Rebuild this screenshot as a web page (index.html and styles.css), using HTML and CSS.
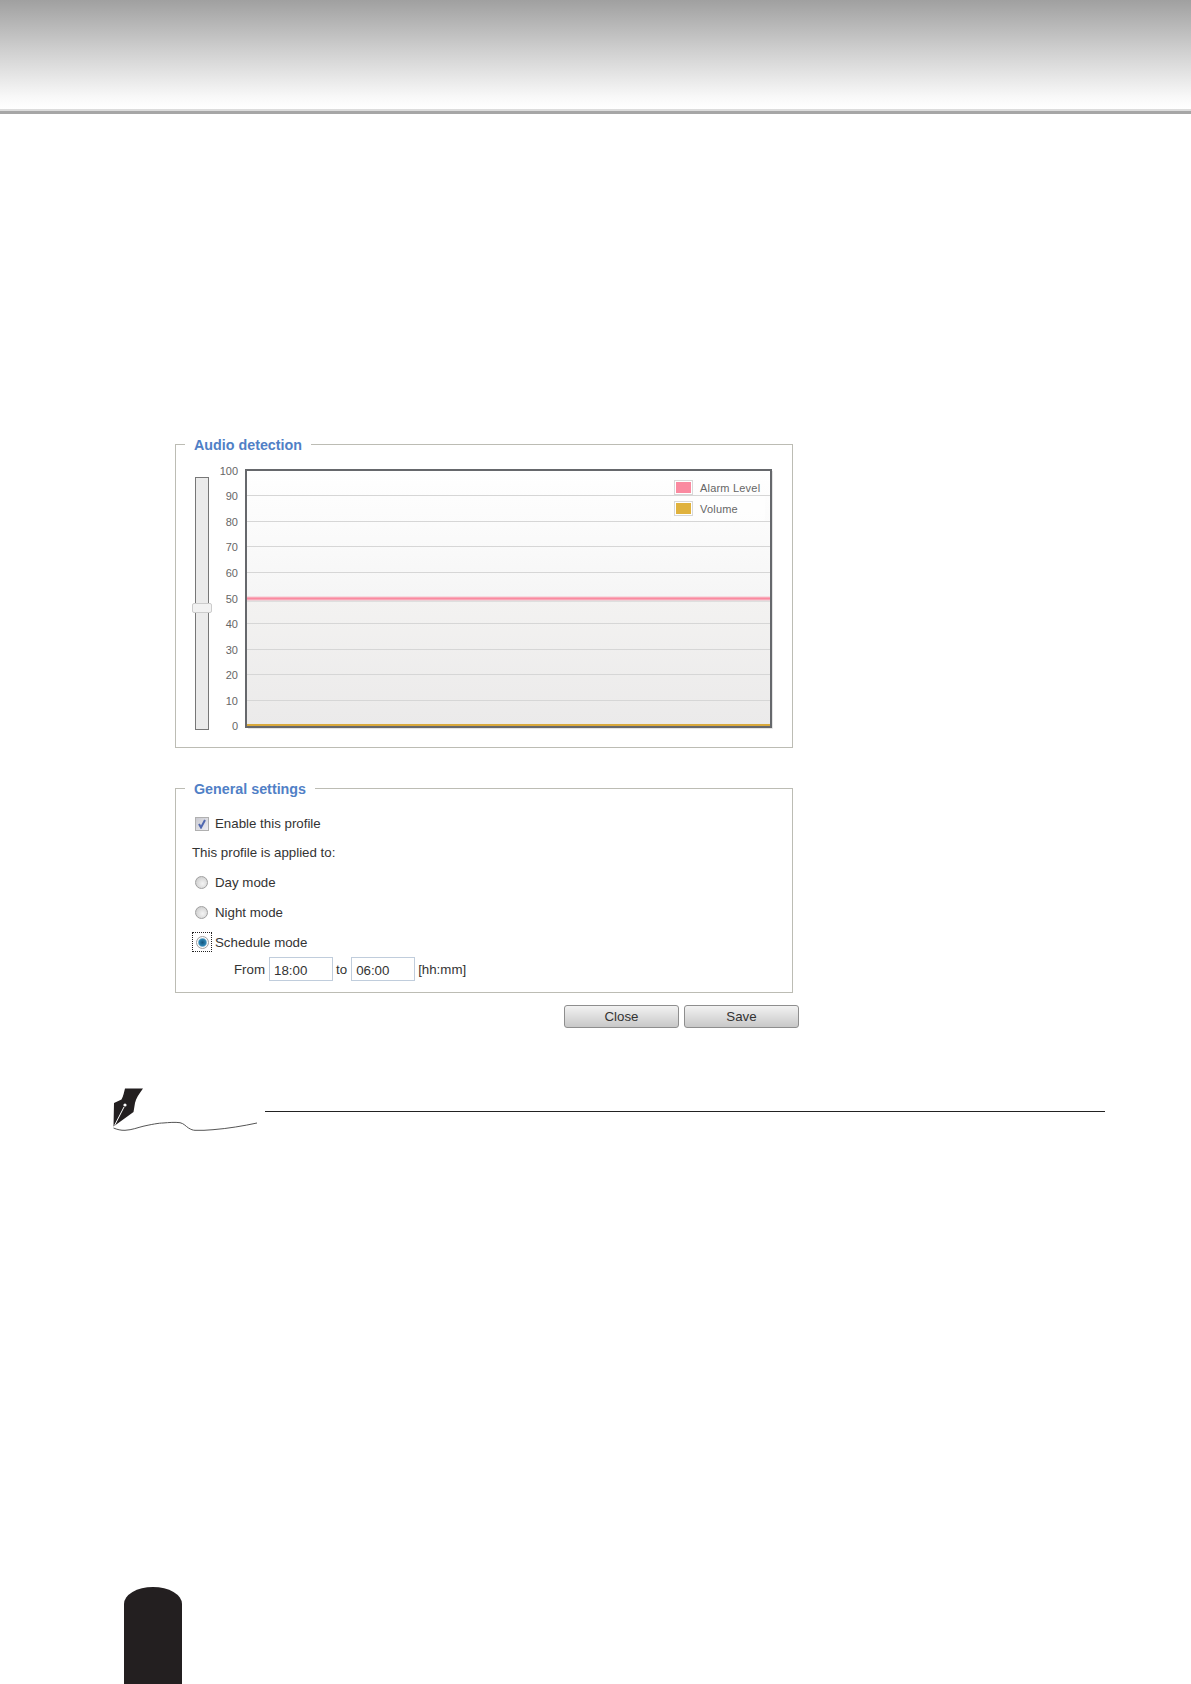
FILE: index.html
```html
<!DOCTYPE html>
<html lang="en">
<head>
  <meta charset="UTF-8" />
  <title>Audio detection</title>
  <link rel="stylesheet" href="styles.css">
</head>
<body>
  <div class="top-band"></div>

  <div class="panel-wrap">
    <fieldset class="group audio-group">
      <legend>Audio detection</legend>
      <div class="audio-row">
        <div class="slider"><div class="slider-thumb"></div></div>
        <svg class="chart" width="560" height="264" viewBox="0 0 560 264">
          <defs>
            <linearGradient id="plotBg" x1="0" y1="0" x2="0" y2="1">
              <stop offset="0" stop-color="#ffffff" />
              <stop offset="0.49" stop-color="#f6f6f6" />
              <stop offset="0.51" stop-color="#f3f2f1" />
              <stop offset="1" stop-color="#ebeaea" />
            </linearGradient>
          </defs>
          <rect x="35" y="1" width="525" height="258" fill="url(#plotBg)" />
          <g class="grid">
            <line x1="36" x2="559" y1="27.5" y2="27.5" />
            <line x1="36" x2="559" y1="53.5" y2="53.5" />
            <line x1="36" x2="559" y1="78.5" y2="78.5" />
            <line x1="36" x2="559" y1="104.5" y2="104.5" />
            <line x1="36" x2="559" y1="155.5" y2="155.5" />
            <line x1="36" x2="559" y1="181.5" y2="181.5" />
            <line x1="36" x2="559" y1="206.5" y2="206.5" />
            <line x1="36" x2="559" y1="232.5" y2="232.5" />
          </g>
          <line class="alarm-shade" x1="36" x2="559" y1="133" y2="133" />
          <line class="alarm-glow" x1="36" x2="559" y1="130.5" y2="130.5" />
          <line class="alarm-line" x1="36" x2="559" y1="130.5" y2="130.5" />
          <line class="volume-line" x1="36" x2="559" y1="257" y2="257" />
          <rect class="plot-frame" x="35" y="2" width="525" height="257" />
          <path class="plot-shadow" d="M561.5 3 V260.5 H37" />
          <g class="axis">
            <text x="27" y="7">100</text>
            <text x="27" y="32">90</text>
            <text x="27" y="58">80</text>
            <text x="27" y="83">70</text>
            <text x="27" y="109">60</text>
            <text x="27" y="135">50</text>
            <text x="27" y="160">40</text>
            <text x="27" y="186">30</text>
            <text x="27" y="211">20</text>
            <text x="27" y="237">10</text>
            <text x="27" y="262">0</text>
          </g>
          <rect x="460" y="28" width="94" height="25" fill="#ffffff" fill-opacity="0.6" />
          <rect class="key-box" x="463.5" y="12.5" width="18" height="14" />
          <rect x="465" y="14" width="15" height="11" fill="#fa8aa0" />
          <text class="key-text" x="489" y="24">Alarm Level</text>
          <rect class="key-box" x="463.5" y="33.5" width="18" height="14" />
          <rect x="465" y="35" width="15" height="11" fill="#e0b23e" />
          <text class="key-text" x="489" y="45">Volume</text>
        </svg>
      </div>
    </fieldset>

    <fieldset class="group general-group">
      <legend>General settings</legend>
      <div class="general-body">
        <label class="option">
          <span class="check">
            <svg width="10" height="10" viewBox="0 0 10 10"><path d="M2 5 L4 8.5 L8 1" fill="none" stroke="#5068b0" stroke-width="2" /></svg>
          </span>
          Enable this profile
        </label>
        <p class="applied">This profile is applied to:</p>
        <label class="option"><span class="radio"></span>Day mode</label>
        <label class="option"><span class="radio"></span>Night mode</label>
        <label class="option"><span class="radio-focus"><span class="radio on"></span></span>Schedule mode</label>
        <div class="time-row">
          <span>From</span>
          <input type="text" value="18:00" />
          <span>to</span>
          <input type="text" value="06:00" />
          <span>[hh:mm]</span>
        </div>
      </div>
    </fieldset>

    <div class="buttons">
      <button class="btn">Close</button>
      <button class="btn">Save</button>
    </div>
  </div>

  <div class="note">
    <svg class="pen" width="152" height="46" viewBox="0 0 152 46">
      <path d="M12 2.5 L30 2.5 C26 8 23 12 22 17 L20.5 26 L15 30 L0.5 40.5 L1 17 L8.5 13.5 C10.5 10 11 6 12 2.5 Z" fill="#231f20" />
      <path d="M1.5 39.5 L11 21" stroke="#ffffff" stroke-width="1" fill="none" />
      <circle cx="12" cy="19" r="1.6" fill="#ffffff" />
      <path d="M0.5 42 C4 43.5 8 44.5 12 44.3 C19 44 25 41.5 30 40.3 C38 38.5 46 37 50 37 C56 36.5 62 36 67 36.7 C71 37.5 73 40.5 75.5 42 C78 43.5 80 44.3 82 44.3 C88 44.6 94 44.2 100 43.7 C115 42.5 130 40 144 37" fill="none" stroke="#555" stroke-width="1" />
    </svg>
    <div class="note-line"></div>
  </div>

  <div class="page-tab"></div>
</body>
</html>
```

FILE: styles.css
```css
* {
  box-sizing: border-box;
}

body {
  margin: 0;
  min-height: 100vh;
  display: flex;
  flex-direction: column;
  background: #ffffff;
  font-family: "Liberation Sans", Arial, sans-serif;
  font-size: 13.3px;
  color: #333333;
  overflow: hidden;
}

.top-band {
  height: 114px;
  background: linear-gradient(to bottom, #a0a0a0, #d0d0d0 45%, #f8f8f8 85%, #ffffff 109px, #dcdcdc 109px, #dcdcdc 111px, #a6a6a6 111px);
}

.panel-wrap {
  margin: 321px 0 0 175px;
  width: 624px;
}

.group {
  width: 618px;
  margin: 0;
  padding: 0;
  border: 1px solid #bcbcb4;
}

.group legend {
  margin-left: 9px;
  padding: 2px 9px 0;
  font-size: 14.3px;
  line-height: 16px;
  font-weight: bold;
  color: #5080c6;
}

.audio-group {
  height: 313px;
}

.audio-row {
  display: flex;
  padding: 15px 0 0 19px;
}

.slider {
  position: relative;
  width: 14px;
  height: 253px;
  margin-top: 9px;
  background: #ebebeb;
  border: 1px solid #777777;
}

.slider-thumb {
  position: absolute;
  top: 125px;
  left: -4px;
  width: 20px;
  height: 10px;
  background: #f2f2f2;
  border: 1px solid #cccccc;
  border-radius: 2px;
}

.chart {
  margin-left: 2px;
  display: block;
  overflow: visible;
}

.grid line {
  stroke: #d6d6d6;
  stroke-width: 1;
}

.alarm-shade {
  stroke: #dedede;
  stroke-width: 2;
}

.alarm-glow {
  stroke: #f8c6d0;
  stroke-width: 4;
}

.alarm-line {
  stroke: #fa8aa0;
  stroke-width: 2;
}

.volume-line {
  stroke: #d9a93c;
  stroke-width: 2;
}

.plot-frame {
  fill: none;
  stroke: #66686c;
  stroke-width: 2;
}

.plot-shadow {
  fill: none;
  stroke: #e4e4e4;
  stroke-width: 1;
}

.axis text {
  font-size: 11px;
  fill: #666666;
  text-anchor: end;
}

.key-box {
  fill: #ffffff;
  stroke: #d8d8d8;
}

.key-text {
  font-size: 11px;
  letter-spacing: 0.2px;
  fill: #666666;
}

.general-group {
  height: 214px;
  margin-top: 31px;
}

.general-body {
  padding: 16px 0 0 16px;
}

.option {
  display: flex;
  align-items: center;
  height: 20px;
  margin-bottom: 10px;
  padding-left: 3px;
}

.check {
  display: flex;
  align-items: center;
  justify-content: center;
  width: 14px;
  height: 14px;
  margin: 2px 6px 0 0;
  background: linear-gradient(135deg, #c9c9d0, #eeeef4);
  border: 1px solid #b0b0b0;
}

.radio {
  display: block;
  width: 13px;
  height: 13px;
  margin-right: 7px;
  border-radius: 50%;
  border: 1px solid #a0a0a0;
  background: radial-gradient(circle at 60% 60%, #f4f4f4, #c4c4c4);
}

.radio.on {
  margin-right: 0;
  background: radial-gradient(circle, #14567e 0, #2e86b4 45%, #ffffff 62%, #dddddd 100%);
}

.radio-focus {
  display: flex;
  align-items: center;
  justify-content: center;
  width: 20px;
  height: 20px;
  margin: 0 3px 0 -3px;
  border: 1px dotted #222222;
}

.applied {
  margin: 0 0 9px 0;
  height: 20px;
  line-height: 20px;
}

.time-row {
  display: flex;
  align-items: center;
  gap: 3px;
  margin: -5px 0 0 42px;
}

.time-row input {
  width: 64px;
  height: 24px;
  margin-left: 1px;
  padding: 2px 4px 0;
  border: 1px solid #c0cddc;
  font-family: inherit;
  font-size: 13.3px;
  color: #333333;
}

.buttons {
  display: flex;
  justify-content: flex-end;
  gap: 5px;
  margin-top: 12px;
}

.btn {
  width: 115px;
  height: 23px;
  padding: 0;
  border: 1px solid #8e8e8e;
  border-radius: 3px;
  background: linear-gradient(to bottom, #f2f2f2, #c8c8c8);
  font-family: inherit;
  font-size: 13.3px;
  color: #333333;
}

.note {
  display: flex;
  align-items: flex-start;
  margin: 58px 86px 0 113px;
}

.pen {
  display: block;
  flex-shrink: 0;
}

.note-line {
  flex: 1;
  margin-top: 25px;
  border-top: 1px solid #222222;
}

.page-tab {
  width: 58px;
  height: 97px;
  margin: auto 0 0 124px;
  background: #231f20;
  border-radius: 29px 29px 0 0 / 17px 17px 0 0;
}
```
